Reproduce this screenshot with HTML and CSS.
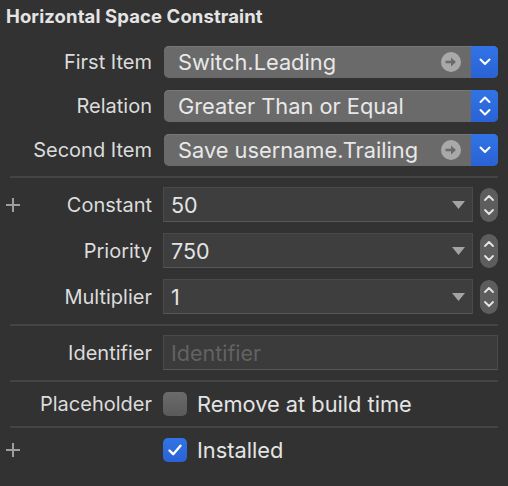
FILE: index.html
```html
<!DOCTYPE html>
<html>
<head>
<meta charset="utf-8">
<link rel="stylesheet" href="styles.css">
</head>
<body>
<div class="panel">
  <h1 class="title">Horizontal Space Constraint</h1>

  <div class="rows popups">
    <div class="row">
      <div class="label"><span></span><span>First Item</span></div>
      <div class="popup">
        <span class="ptext">Switch.Leading</span>
        <svg class="goto" width="20" height="20" viewBox="0 0 20 20"><circle cx="10" cy="10" r="10" fill="#a9a9a9"/><path d="M4.5 10H12" stroke="#6b6b6b" stroke-width="2.6" fill="none"/><path d="M10 5.5L15 10L10 14.5Z" fill="#6b6b6b"/></svg>
        <span class="pbtn"><svg width="12" height="8" viewBox="0 0 12 8"><polyline points="1.5,1.5 6,6 10.5,1.5" fill="none" stroke="#fff" stroke-width="2" stroke-linecap="round" stroke-linejoin="round"/></svg></span>
      </div>
    </div>
    <div class="row">
      <div class="label"><span></span><span>Relation</span></div>
      <div class="popup">
        <span class="ptext">Greater Than or Equal</span>
        <span class="pbtn"><svg width="12" height="20" viewBox="0 0 12 20"><polyline points="1.5,6 6,1.5 10.5,6" fill="none" stroke="#fff" stroke-width="2" stroke-linecap="round" stroke-linejoin="round"/><polyline points="1.5,14 6,18.5 10.5,14" fill="none" stroke="#fff" stroke-width="2" stroke-linecap="round" stroke-linejoin="round"/></svg></span>
      </div>
    </div>
    <div class="row">
      <div class="label"><span></span><span>Second Item</span></div>
      <div class="popup">
        <span class="ptext">Save username.Trailing</span>
        <svg class="goto" width="20" height="20" viewBox="0 0 20 20"><circle cx="10" cy="10" r="10" fill="#a9a9a9"/><path d="M4.5 10H12" stroke="#6b6b6b" stroke-width="2.6" fill="none"/><path d="M10 5.5L15 10L10 14.5Z" fill="#6b6b6b"/></svg>
        <span class="pbtn"><svg width="12" height="8" viewBox="0 0 12 8"><polyline points="1.5,1.5 6,6 10.5,1.5" fill="none" stroke="#fff" stroke-width="2" stroke-linecap="round" stroke-linejoin="round"/></svg></span>
      </div>
    </div>
  </div>

  <div class="sep"></div>

  <div class="rows fields">
    <div class="row">
      <div class="label"><svg class="plus" width="14" height="14" viewBox="0 0 14 14"><path d="M7 0V14M0 7H14" stroke="#9e9e9e" stroke-width="2"/></svg><span>Constant</span></div>
      <div class="combo">
        <div class="field"><span class="ftext">50</span><svg width="13" height="8" viewBox="0 0 13 8"><polygon points="0,0 13,0 6.5,8" fill="#a3a3a3"/></svg></div>
        <div class="stepper"><svg width="12" height="26" viewBox="0 0 12 26"><polyline points="2,8 6,4 10,8" fill="none" stroke="#e6e6e6" stroke-width="1.8" stroke-linecap="round" stroke-linejoin="round"/><polyline points="2,18 6,22 10,18" fill="none" stroke="#e6e6e6" stroke-width="1.8" stroke-linecap="round" stroke-linejoin="round"/></svg></div>
      </div>
    </div>
    <div class="row">
      <div class="label"><span></span><span>Priority</span></div>
      <div class="combo">
        <div class="field"><span class="ftext">750</span><svg width="13" height="8" viewBox="0 0 13 8"><polygon points="0,0 13,0 6.5,8" fill="#a3a3a3"/></svg></div>
        <div class="stepper"><svg width="12" height="26" viewBox="0 0 12 26"><polyline points="2,8 6,4 10,8" fill="none" stroke="#e6e6e6" stroke-width="1.8" stroke-linecap="round" stroke-linejoin="round"/><polyline points="2,18 6,22 10,18" fill="none" stroke="#e6e6e6" stroke-width="1.8" stroke-linecap="round" stroke-linejoin="round"/></svg></div>
      </div>
    </div>
    <div class="row">
      <div class="label"><span></span><span>Multiplier</span></div>
      <div class="combo">
        <div class="field"><span class="ftext">1</span><svg width="13" height="8" viewBox="0 0 13 8"><polygon points="0,0 13,0 6.5,8" fill="#a3a3a3"/></svg></div>
        <div class="stepper"><svg width="12" height="26" viewBox="0 0 12 26"><polyline points="2,8 6,4 10,8" fill="none" stroke="#e6e6e6" stroke-width="1.8" stroke-linecap="round" stroke-linejoin="round"/><polyline points="2,18 6,22 10,18" fill="none" stroke="#e6e6e6" stroke-width="1.8" stroke-linecap="round" stroke-linejoin="round"/></svg></div>
      </div>
    </div>
  </div>

  <div class="sep"></div>

  <div class="rows single">
    <div class="row">
      <div class="label"><span></span><span>Identifier</span></div>
      <div class="field ident"><span class="ftext placeholder">Identifier</span></div>
    </div>
  </div>

  <div class="sep"></div>

  <div class="rows single check">
    <div class="row">
      <div class="label"><span></span><span>Placeholder</span></div>
      <div class="checkrow"><span class="box"></span><span class="ctext">Remove at build time</span></div>
    </div>
  </div>

  <div class="sep"></div>

  <div class="rows single check">
    <div class="row">
      <div class="label"><svg class="plus" width="14" height="14" viewBox="0 0 14 14"><path d="M7 0V14M0 7H14" stroke="#9e9e9e" stroke-width="2"/></svg><span></span></div>
      <div class="checkrow"><span class="box on"><svg width="16" height="14" viewBox="0 0 16 14"><polyline points="2.5,7.5 6.2,11.2 13.5,2.8" fill="none" stroke="#fff" stroke-width="2.4" stroke-linecap="round" stroke-linejoin="round"/></svg></span><span class="ctext">Installed</span></div>
    </div>
  </div>
</div>
</body>
</html>
```

FILE: styles.css
```css
html, body {
  margin: 0;
  padding: 0;
  background: #323232;
}
body {
  width: 508px;
  height: 486px;
  overflow: hidden;
  font-family: Inter, "Noto Sans", "Liberation Sans", sans-serif;
  color: #dedede;
}
.panel {
  padding: 0 10px 0 0;
}
.title {
  margin: 0;
  padding: 5px 0 0 6px;
  height: 25px;
  font-size: 18.5px;
  font-weight: 700;
  line-height: 22px;
  color: #e4e4e4;
  letter-spacing: 0.1px;
}
.rows {
  display: flex;
  flex-direction: column;
}
.popups {
  margin-top: 16px;
  gap: 12px;
  margin-bottom: 10px;
}
.fields {
  margin-top: 9px;
  gap: 11px;
  margin-bottom: 10px;
}
.single {
  margin-top: 9px;
  margin-bottom: 10px;
}
.single.check {
  margin-top: 10px;
}
.row {
  display: grid;
  grid-template-columns: 152px 1fr;
  column-gap: 11px;
  align-items: center;
}
.label {
  display: flex;
  justify-content: space-between;
  align-items: center;
  font-size: 20px;
  color: #dcdcdc;
  white-space: nowrap;
}
.plus {
  margin-left: 6px;
  flex: none;
}
.popup {
  display: flex;
  align-items: center;
  height: 32px;
  margin-left: 1px;
  background: #6a6a6a;
  border-radius: 5px;
  box-shadow: inset 0 1px 0 #787878;
  overflow: hidden;
}
.ptext {
  flex: 1;
  padding-left: 14px;
  font-size: 21.8px;
  color: #e8e8e8;
  white-space: nowrap;
}
.goto {
  margin-right: 10px;
  flex: none;
}
.pbtn {
  width: 27px;
  height: 32px;
  flex: none;
  display: flex;
  align-items: center;
  justify-content: center;
  background: linear-gradient(#3174e6, #2a62d5);
}
.combo {
  display: flex;
  align-items: center;
  gap: 7px;
}
.field {
  flex: 1;
  height: 35px;
  box-sizing: border-box;
  display: flex;
  align-items: center;
  justify-content: space-between;
  background: #3e3e3e;
  border: 1px solid #4a4a4a;
  border-bottom-color: #575757;
  padding: 0 7px 0 7px;
}
.ftext {
  font-size: 21.5px;
  color: #e4e4e4;
}
.placeholder {
  color: #626262;
}
.ident {
  background: #3b3b3b;
}
.stepper {
  width: 18px;
  height: 34px;
  flex: none;
  border-radius: 9px;
  background: #5d5d5d;
  display: flex;
  align-items: center;
  justify-content: center;
}
.sep {
  height: 2px;
  margin-left: 10px;
  background: #444444;
}
.checkrow {
  display: flex;
  align-items: center;
  gap: 10px;
  height: 24px;
}
.box {
  width: 24px;
  height: 24px;
  box-sizing: border-box;
  border-radius: 5px;
  background: linear-gradient(#6b6b6b, #5a5a5a);
  display: flex;
  align-items: center;
  justify-content: center;
  flex: none;
}
.box.on {
  background: linear-gradient(#3274e5, #2a62d4);
}
.ctext {
  font-size: 21.8px;
  color: #e4e4e4;
  white-space: nowrap;
}
```
